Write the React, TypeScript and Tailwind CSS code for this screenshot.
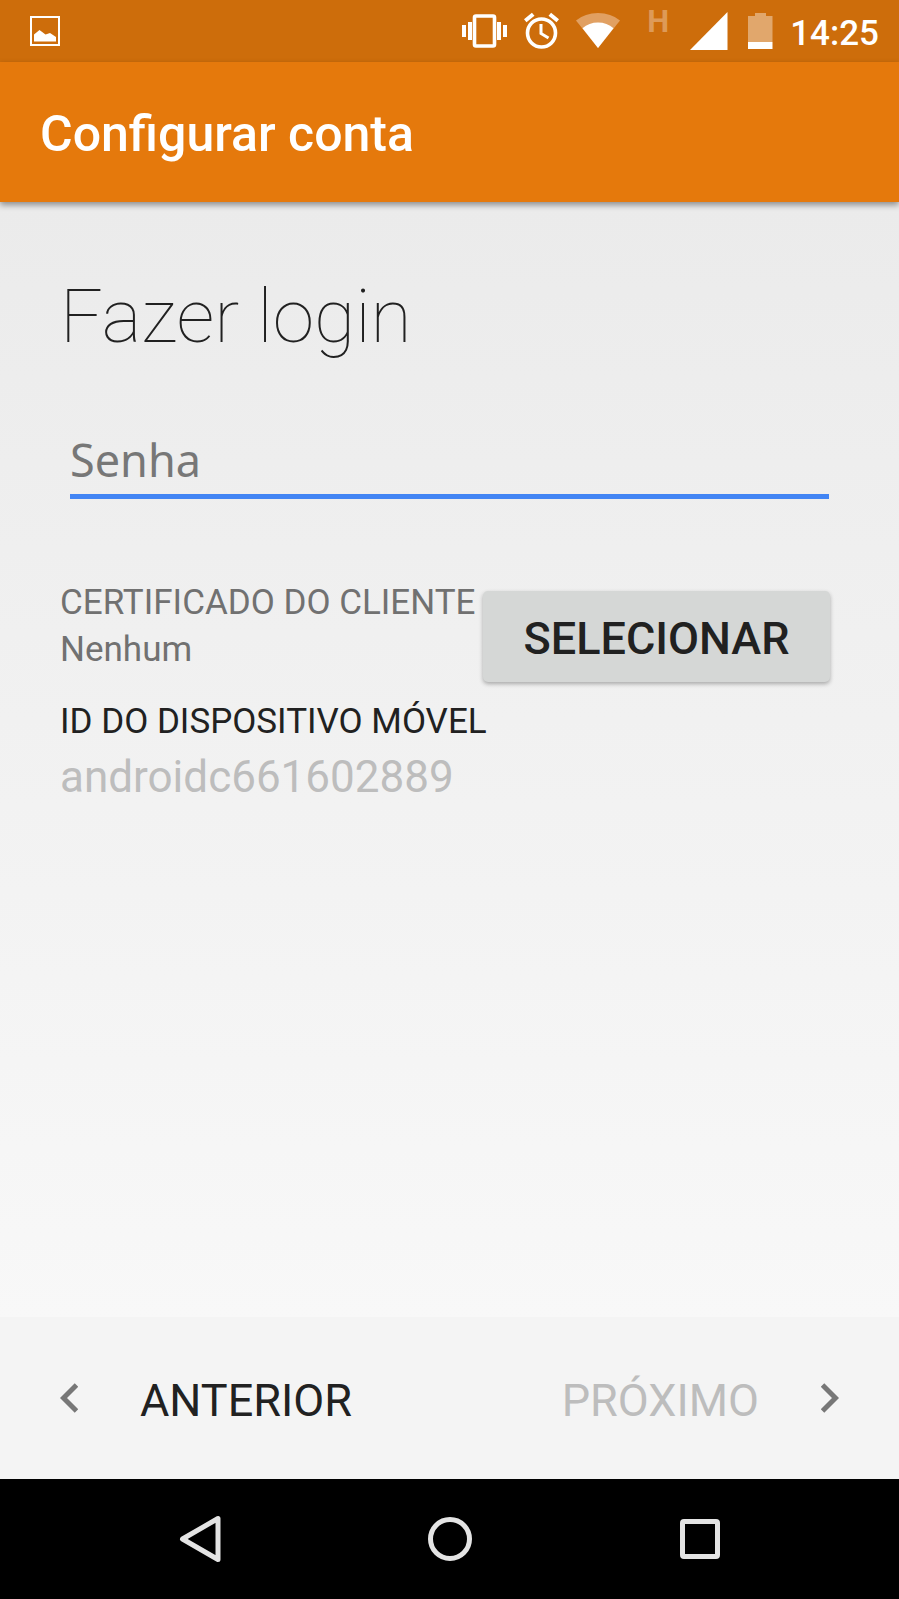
function VibrateIcon() {
  return (
    <svg width="45" height="38" viewBox="0 0 45 38" fill="#fff">
      <path d="M0 13h4v12H0zM6 10h4v18H6zM35 10h4v18h-4zM41 13h4v12h-4z" />
      <rect x="12.500" y="4" width="20" height="30" rx="1.500" fill="none" stroke="#fff" strokeWidth="3.600" />
    </svg>
  );
}

function AlarmIcon() {
  return (
    <svg width="35" height="38" viewBox="0 0 35 38" fill="none" stroke="#fff">
      <circle cx="17.5" cy="21" r="14" strokeWidth="3.6" />
      <path d="M17 12v9.500l7.500 4.500" strokeWidth="3" />
      <path d="M1.200 8.800l8-6.600M33.800 8.800l-8-6.600" strokeWidth="4" />
    </svg>
  );
}

function WifiIcon() {
  return (
    <svg width="44" height="38" viewBox="0 0 44 38">
      <path d="M22 36L0 8.500Q9 1 22 1t22 7.500z" fill="#e1a062" />
      <path d="M22 36L6.500 16.300Q13 10.500 22 10.500t15.500 5.800z" fill="#fff" />
    </svg>
  );
}

function SignalIcon() {
  return (
    <svg width="38" height="38" viewBox="0 0 38 38">
      <path d="M37.500 0v38H0z" fill="#fff" />
    </svg>
  );
}

function BatteryIcon() {
  return (
    <svg width="28" height="38" viewBox="0 0 28 38">
      <path d="M10 1h11v3h6.500v26H3V4h7z" fill="#e1a76c" />
      <path d="M3 30h24.500v7H3z" fill="#fff" />
    </svg>
  );
}

function StatusBar() {
  return (
    <div className="flex h-[62px] items-center justify-between bg-[#cd6d0b] pr-5 pl-[30px] text-white">
      <svg width="30" height="30" viewBox="0 0 30 30">
        <rect x="1" y="1" width="28" height="28" fill="none" stroke="#fff" strokeWidth="2" />
        <path d="M4 25.500v-7l5.500-4.500 6 4.500 4.500-1.500 6 4v4.500z" fill="#fff" />
      </svg>
      <div className="flex items-center gap-[17px] self-stretch">
        <VibrateIcon />
        <AlarmIcon />
        <WifiIcon />
        <span className="w-9 self-start pt-1.5 pr-1 text-right text-[31px] leading-8 font-bold text-[#dd9a58]">
          H
        </span>
        <SignalIcon />
        <BatteryIcon />
        <span className="pt-1.5 text-[35px] leading-10 font-medium">14:25</span>
      </div>
    </div>
  );
}

function NavigationBar() {
  return (
    <nav className="flex h-[120px] justify-center bg-black">
      <button type="button" aria-label="Voltar" className="flex w-[250px] items-center justify-center">
        <svg width="42" height="48" viewBox="0 0 42 48">
          <path d="M39 3.500v41L3.500 24z" fill="none" stroke="#e4e4e4" strokeWidth="5" strokeLinejoin="round" />
        </svg>
      </button>
      <button type="button" aria-label="Início" className="flex w-[250px] items-center justify-center">
        <svg width="44" height="44" viewBox="0 0 44 44">
          <circle cx="22" cy="22" r="19.500" fill="none" stroke="#e4e4e4" strokeWidth="5" />
        </svg>
      </button>
      <button type="button" aria-label="Recentes" className="flex w-[250px] items-center justify-center">
        <svg width="40" height="40" viewBox="0 0 40 40">
          <rect x="2.500" y="2.500" width="35" height="35" rx="1.500" fill="none" stroke="#e4e4e4" strokeWidth="5" />
        </svg>
      </button>
    </nav>
  );
}

export default function App() {
  return (
    <div className="flex min-h-screen flex-col font-[Roboto,sans-serif] text-[#212121]">
      <StatusBar />
      <header className="z-10 flex h-[140px] items-center bg-[#e5790c] px-10 pt-1 shadow-[0_3px_6px_rgba(0,0,0,0.4)]">
        <h1 className="text-[50px] leading-[60px] font-medium text-white">Configurar conta</h1>
      </header>

      <main className="flex-1 bg-linear-to-b from-[#ebebeb] to-[#f8f8f8] px-[60px] pt-[70px]">
        <h2 className="text-[75px] leading-[88px] font-thin text-[#212121]">Fazer login</h2>

        <div className="mt-[72px] px-[10px]">
          <input
            type="password"
            aria-label="Senha"
            placeholder="Senha"
            className="block h-[67px] w-full border-b-5 border-[#4285f4] bg-transparent pb-2 font-['Noto_Sans',sans-serif] text-[45px] leading-[54px] outline-none placeholder:text-[#777777] placeholder:opacity-100"
          />
        </div>

        <div className="mt-20 flex justify-between">
          <div className="text-[35px] leading-[47px] whitespace-nowrap text-[#717171]">
            <p>CERTIFICADO DO CLIENTE</p>
            <p>Nenhum</p>
          </div>
          <button
            type="button"
            className="mt-3 mr-[9px] h-[91px] w-[347px] rounded-[5px] bg-[#d5d7d6] pt-1 text-[45px] font-medium shadow-[0_2px_4px_rgba(0,0,0,0.3)]"
          >
            SELECIONAR
          </button>
        </div>

        <div className="mt-4">
          <p className="text-[35px] leading-[47px]">ID DO DISPOSITIVO MÓVEL</p>
          <p className="text-[44px] leading-[64px] text-[#bdbdbd]">androidc661602889</p>
        </div>
      </main>

      <footer className="flex h-[162px] items-center justify-between bg-[#f4f4f4] px-[60px] text-[45px]">
        <button type="button" className="flex items-center gap-[62px]">
          <svg width="18" height="30" viewBox="0 0 18 30" fill="none" stroke="#777" strokeWidth="5">
            <path d="M16.500 2L3.500 15l13 13" />
          </svg>
          <span className="pt-1.5">ANTERIOR</span>
        </button>
        <button type="button" disabled className="flex items-center gap-[62px] text-[#bdbdbd]">
          <span className="pt-1.5">PRÓXIMO</span>
          <svg width="18" height="30" viewBox="0 0 18 30" fill="none" stroke="#777" strokeWidth="5">
            <path d="M1.500 2l13 13-13 13" />
          </svg>
        </button>
      </footer>

      <NavigationBar />
    </div>
  );
}
